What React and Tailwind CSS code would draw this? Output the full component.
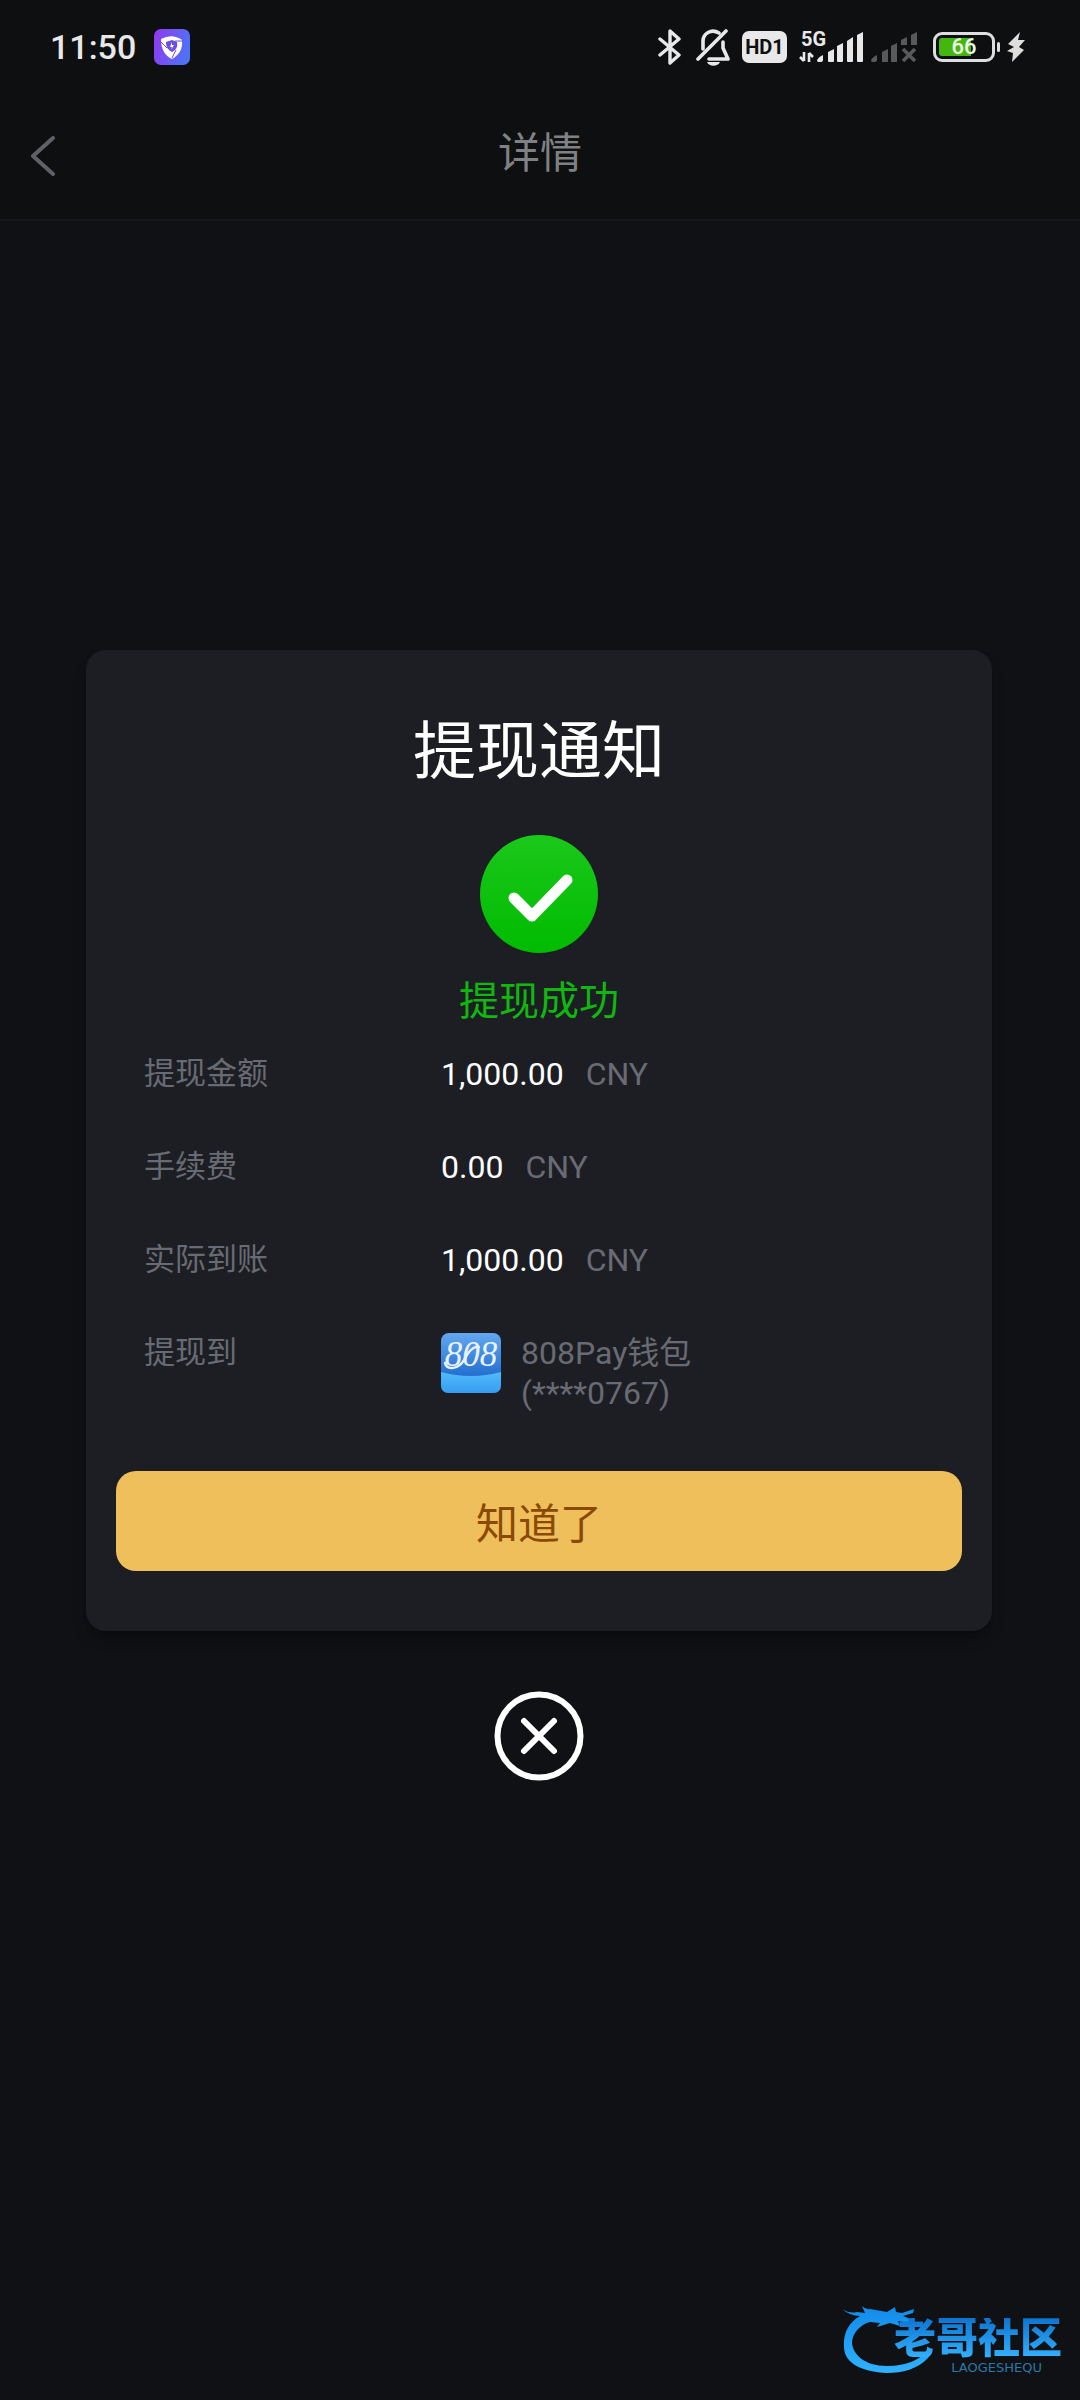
import React from 'react';

const rows = [
    { label: '提现金额', amount: '1,000.00', unit: 'CNY' },
    { label: '手续费', amount: '0.00', unit: 'CNY' },
    { label: '实际到账', amount: '1,000.00', unit: 'CNY' },
];

const BluetoothIcon = () => (
    <svg viewBox="0 0 24 38" className="w-6 h-[38px]" fill="none" stroke="#e8e8e8" strokeWidth="3.4" strokeLinejoin="round" strokeLinecap="round">
        <path d="M2 11 L21 27 L12 35 V3 L21 11 L2 27" />
    </svg>
);

const MutedBellIcon = () => (
    <svg viewBox="0 0 34 38" className="w-[34px] h-[38px]" fill="none" stroke="#e8e8e8" strokeWidth="3.6" strokeLinecap="round" strokeLinejoin="round">
        <path d="M23 5 C15 0 7 6 7 13 V21" />
        <path d="M27 14 V20 L32 31 H13" />
        <path d="M2 31 L30 3" />
        <path d="M11 34 H24 C22 39 13 39 11 34 Z" fill="#e8e8e8" stroke="none" />
    </svg>
);

const SignalIcon = () => (
    <svg viewBox="0 0 64 32" className="w-16 h-8" fill="#e8e8e8">
        <path d="M5 21 V30 M1 26 L5 30" stroke="#e8e8e8" strokeWidth="2.6" fill="none" />
        <path d="M10 31 V22 M10 22 L14 26" stroke="#e8e8e8" strokeWidth="2.6" fill="none" />
        <path d="M18 30 Q18 27 24 24 V29 Q24 31 22 31 H19 Z" />
        <path d="M29 21 L35 18 V30 Q35 31 34 31 H30 Q29 31 29 30 Z" />
        <path d="M38 15 L44 12 V30 Q44 31 43 31 H39 Q38 31 38 30 Z" />
        <path d="M48 10 L54 6 V30 Q54 31 53 31 H49 Q48 31 48 30 Z" />
        <path d="M58 4 L64 1 V30 Q64 31 63 31 H59 Q58 31 58 30 Z" />
    </svg>
);

const NoSignalIcon = () => (
    <svg viewBox="0 0 46 32" className="w-[46px] h-8" fill="#58595b">
        <path d="M0 30 Q0 27 6 24 V29 Q6 31 4 31 H1 Z" />
        <path d="M11 21 L17 18 V31 H11 Z" />
        <path d="M20 15 L26 12 V31 H20 Z" />
        <path d="M30 9 L36 6 V14 H30 Z" />
        <path d="M40 4 L46 1 V14 H40 Z" />
        <path d="M32 18 L44 30 M44 18 L32 30" stroke="#58595b" strokeWidth="3.6" />
    </svg>
);

const VpnIcon = () => (
    <svg viewBox="0 0 36 36" className="w-9 h-9">
        <defs>
            <linearGradient id="vpn" x1="0" x2="1" y1="0.3" y2="0.6">
                <stop offset="0" stopColor="#8d3cf0" />
                <stop offset="1" stopColor="#4c74f8" />
            </linearGradient>
        </defs>
        <rect width="36" height="36" rx="7" fill="url(#vpn)" />
        <path d="M7 10 Q18 4 28 11 C29 20 25 26 18 30 C11 27 7 20 7 10 Z" fill="#ffffff" />
        <path d="M12 13 L18 11 L23 13 C24 18 22 21 18 23 C14 21 12 18 12 13 Z" fill="#6a50dd" />
        <path d="M7 13 L13 19 M29 12 L21 12 M18 29 L22 21" stroke="#6a50dd" strokeWidth="1" />
        <path d="M18 13 L16 18 H18 L17 21 L20 16 H18 Z" fill="#ffffff" />
    </svg>
);

const StatusBar = () => (
    <div className="flex h-[94px] items-center justify-between pl-[50px] pr-[55px] text-[#e8e8e8]">
        <div className="flex items-center gap-[18px]">
            <span className="text-[34px] leading-[40px] font-medium">11:50</span>
            <VpnIcon />
        </div>
        <div className="flex items-center">
            <BluetoothIcon />
            <div className="ml-[14px]"><MutedBellIcon /></div>
            <span className="ml-3 flex h-8 w-[45px] items-center justify-center rounded-[7px] bg-[#e8e8e8] text-[20px] font-bold text-[#0e0f11]">HD1</span>
            <div className="relative ml-3">
                <SignalIcon />
                <span className="absolute left-[2px] -top-[2px] text-[20px] leading-[20px] font-bold">5G</span>
            </div>
            <div className="ml-2"><NoSignalIcon /></div>
            <div className="ml-4 flex h-[30px] w-[62px] rounded-[9px] border-[3px] border-[#dedede] p-[3px]">
                <div className="flex h-full w-full items-center justify-center rounded-[3px] bg-linear-to-r from-[#43b70e] from-[64%] to-transparent to-[64%] text-[22px] leading-[18px] font-medium text-[#effbe9]">66</div>
            </div>
            <span className="ml-[2px] h-[10px] w-[3px] rounded-full bg-[#dedede]"></span>
            <svg viewBox="0 0 18 30" className="ml-[7px] h-[30px] w-[18px]" fill="#dedede">
                <path d="M13 0 L1 12 L7 15 L0 19 L6 21 L5 30 L17 18 L12 15 L18 8 L11 8 Z" />
            </svg>
        </div>
    </div>
);

const WalletLogo = () => (
    <svg viewBox="0 0 60 60" className="h-[60px] w-[60px] shrink-0">
        <defs>
            <linearGradient id="walletTop" x1="0" x2="0" y1="0" y2="1">
                <stop offset="0" stopColor="#62a8f0" />
                <stop offset="0.7" stopColor="#2570d0" />
            </linearGradient>
            <linearGradient id="walletBottom" x1="0" x2="0" y1="0" y2="1">
                <stop offset="0" stopColor="#52bbfa" />
                <stop offset="1" stopColor="#369cf3" />
            </linearGradient>
        </defs>
        <rect width="60" height="60" rx="8" fill="url(#walletTop)" />
        <path d="M0 39 Q30 47 60 39 V52 Q60 60 52 60 H8 Q0 60 0 52 Z" fill="url(#walletBottom)" />
        <text x="30" y="33" textAnchor="middle" fontFamily="Liberation Serif, serif" fontStyle="italic" fontSize="35" fill="#e8f3ff">808</text>
        {/* ribbon that ties the first two figures together */}
        <path d="M4 30 C6 38 18 36 23 27 C27 20 31 13 38 14" fill="none" stroke="#e8f3ff" strokeWidth="2.4" strokeLinecap="round" />
    </svg>
);

const SiteMark = () => (
    <div className="relative flex w-60 justify-end pr-[18px]">
        <svg viewBox="0 0 90 72" className="absolute left-[2px] top-0 h-[72px] w-[90px]">
            <defs>
                <linearGradient id="dragon" x1="0" x2="0" y1="0" y2="1">
                    <stop offset="0" stopColor="#118bea" />
                    <stop offset="1" stopColor="#2fb2ff" />
                </linearGradient>
            </defs>
            <path
                d="M0 3 Q8 8 15 6 L23 7 L20 0 Q24 4 28 3 L45 6 L53 1 L54 6 L60 7 L72 3 L71 7 L61 10 L71 14 L66 17 L56 15 L58 20 L48 17 L35 21 L38 17 L28 16 C19 18 10 27 10 37 C11 48 22 60 45 60 C65 60 80 53 88 42 Q89 48 86 52 C76 63 60 67 45 67 C20 66 2 57 2 41 C1 27 7 16 18 10 Q8 10 0 3 Z"
                fill="url(#dragon)"
            />
        </svg>
        <div className="relative flex flex-col items-end pt-3">
            <span className="bg-linear-to-b from-[#0d74d0] to-[#35b4ff] bg-clip-text text-[42px] leading-[42px] font-black text-transparent">老哥社区</span>
            <span className="pr-5 font-['DejaVu_Sans'] text-[13px] leading-[16px] text-[#2a78a8]">LAOGESHEQU</span>
        </div>
    </div>
);

const App = () => {
    return (
        <div className="flex min-h-screen flex-col bg-[#101115] font-[Roboto,'Noto_Sans_CJK_SC',sans-serif]">
            <header className="border-b-2 border-[#16181b] bg-[#0e0f11]">
                <StatusBar />
                <div className="grid h-[125px] grid-cols-[80px_1fr_80px] pt-[38px]">
                    <button type="button" aria-label="返回" className="flex h-12 items-center pl-[30px]">
                        <svg viewBox="0 0 26 40" className="h-10 w-[26px]" fill="none" stroke="#606166" strokeWidth="4" strokeLinecap="round" strokeLinejoin="round">
                            <path d="M23 2 L3 20 L23 38" />
                        </svg>
                    </button>
                    <h1 className="text-center text-[42px] leading-[44px] text-[#808184]">详情</h1>
                </div>
            </header>

            <main className="flex flex-1 flex-col items-center pl-[86px] pr-[88px] pt-[429px]">
                <section className="w-full rounded-[20px] bg-[#1d1e23] px-[30px] pt-[58px] pb-[60px] shadow-lg shadow-black/30">
                    <h2 className="text-center text-[63px] leading-[88px] text-white">提现通知</h2>
                    <svg viewBox="0 0 120 120" className="mx-auto mt-[38px] h-[120px] w-[120px]">
                        <defs>
                            <linearGradient id="ok" x1="0" x2="0" y1="0" y2="1">
                                <stop offset="0" stopColor="#1bc81b" />
                                <stop offset="1" stopColor="#00bb00" />
                            </linearGradient>
                        </defs>
                        <circle cx="60" cy="60" r="59" fill="url(#ok)" />
                        <path d="M35 64 L53 82 L88 46" fill="none" stroke="#ffffff" strokeWidth="11" strokeLinecap="round" strokeLinejoin="round" />
                    </svg>
                    <p className="mt-[18px] text-center text-[40px] leading-[60px] text-[#0fb70f]">提现成功</p>

                    <dl className="mt-[22px] pl-7 text-[32px] text-[#686b74]">
                        {rows.map((row) => (
                            <div key={row.label} className="mb-[53px] flex leading-[40px]">
                                <dt className="w-[297px] text-[31px]">{row.label}</dt>
                                <dd className="flex gap-[22px]">
                                    <span className="text-white">{row.amount}</span>
                                    <span>{row.unit}</span>
                                </dd>
                            </div>
                        ))}
                        <div className="flex leading-[40px]">
                            <dt className="w-[297px] text-[31px]">提现到</dt>
                            <dd className="flex gap-5">
                                <WalletLogo />
                                <span>808Pay钱包<br />(****0767)</span>
                            </dd>
                        </div>
                    </dl>

                    <button type="button" className="mt-[58px] h-[100px] w-full rounded-[20px] bg-[#eebf5b] pt-2 text-[42px] leading-[42px] text-[#8a4a06]">
                        知道了
                    </button>
                </section>

                <button type="button" aria-label="关闭" className="mt-[60px] h-[90px] w-[90px]">
                    <svg viewBox="0 0 90 90" className="h-full w-full" fill="none" stroke="#ffffff" strokeWidth="6" strokeLinecap="round">
                        <circle cx="45" cy="45" r="41.5" />
                        <path d="M30 30 L60 60 M60 30 L30 60" />
                    </svg>
                </button>
            </main>

            <footer className="flex justify-end pb-6">
                <SiteMark />
            </footer>
        </div>
    );
};

export default App;
